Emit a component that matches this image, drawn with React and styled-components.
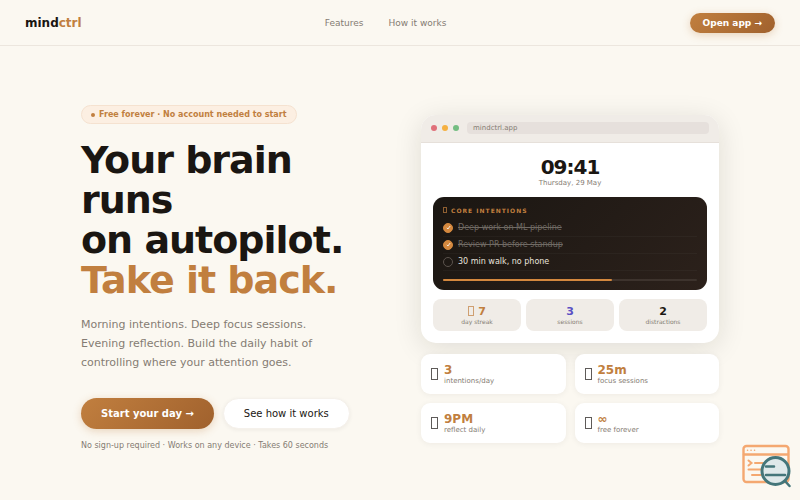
import React from "react";
import styled, { createGlobalStyle } from "styled-components";

const GlobalStyle = createGlobalStyle`
  * {
    box-sizing: border-box;
  }
  body {
    margin: 0;
    background-color: #fbf8f1;
    color: #1a1612;
    font-family: "DejaVu Sans", sans-serif;
  }
`;

const Navbar = styled.nav`
  display: flex;
  justify-content: space-between;
  align-items: center;
  height: 46px;
  padding: 0 25px;
  border-bottom: 1px solid #ece6de;
`;
const Logo = styled.a`
  color: #1a1612;
  font-size: 12px;
  font-weight: bold;
  text-decoration: none;
  span {
    color: #c17f3f;
  }
`;
const NavLinks = styled.div`
  display: flex;
  gap: 25px;
`;
const NavLink = styled.a`
  color: #857c73;
  font-size: 9px;
  text-decoration: none;
`;

const Button = styled.button`
  height: ${(props) => (props.$small ? "20px" : "31px")};
  padding: ${(props) => (props.$small ? "0 13px" : "0 20px")};
  border: ${(props) => (props.$light ? "1px solid #f5f1eb" : "none")};
  border-radius: 16px;
  background: ${(props) =>
    props.$light ? "#fff" : "linear-gradient(135deg, #c17f3f, #a0612d)"};
  color: ${(props) => (props.$light ? "#1a1612" : "#fff")};
  font-family: inherit;
  font-size: ${(props) => (props.$small ? "9px" : "10px")};
  font-weight: ${(props) => (props.$light ? "normal" : "bold")};
  white-space: nowrap;
  box-shadow: ${(props) =>
    props.$light
      ? "0 1px 4px rgba(26, 22, 18, 0.06)"
      : "0 2px 8px rgba(193, 127, 63, 0.3)"};
  cursor: pointer;
`;

const Hero = styled.main`
  display: grid;
  grid-template-columns: 1fr 1fr;
  gap: 42px;
  align-items: center;
  max-width: 688px;
  margin: 0 auto;
  padding: 59px 25px 40px;
`;
const HeroText = styled.section`
  display: flex;
  flex-direction: column;
  align-items: flex-start;
`;
const Badge = styled.div`
  display: flex;
  align-items: center;
  gap: 4px;
  height: 19px;
  padding: 0 9px;
  border: 1px solid #f5e2d0;
  border-radius: 10px;
  background-color: #fcefe2;
  color: #c17f3f;
  font-size: 8px;
  font-weight: bold;
  white-space: nowrap;
`;
const BadgeDot = styled.span`
  width: 4px;
  height: 4px;
  border-radius: 50%;
  background-color: #c17f3f;
`;
const HeroTitle = styled.h1`
  margin: 16px 0 15px;
  font-size: 38px;
  line-height: 40px;
  letter-spacing: -1px;
  span {
    color: #c17f3f;
  }
`;
const HeroCopy = styled.p`
  max-width: 262px;
  margin: 0 0 26px;
  color: #857c73;
  font-size: 11px;
  line-height: 19px;
`;
const Actions = styled.div`
  display: flex;
  gap: 9px;
`;
const Note = styled.p`
  margin: 11px 0 0;
  color: #857c73;
  font-size: 8px;
  line-height: 12px;
  white-space: nowrap;
`;

const Preview = styled.section`
  display: flex;
  flex-direction: column;
  gap: 11px;
`;
const BrowserWindow = styled.div`
  overflow: hidden;
  border-radius: 15px;
  background-color: #fff;
  box-shadow: 0 5px 28px rgba(26, 22, 18, 0.12);
`;
const BrowserBar = styled.div`
  display: flex;
  align-items: center;
  gap: 5px;
  height: 28px;
  padding: 0 10px;
  border-bottom: 1px solid #e6e0da;
  background-color: #f0ece7;
`;
const WindowDot = styled.span`
  width: 6px;
  height: 6px;
  border-radius: 50%;
  background-color: ${(props) => props.$color};
`;
const Address = styled.div`
  flex: 1;
  margin-left: 3px;
  padding: 0 6px;
  border-radius: 4px;
  background-color: #e6e0dc;
  color: #857c73;
  font-size: 7px;
  line-height: 12px;
`;
const Screen = styled.div`
  padding: 12px;
`;
const Clock = styled.div`
  font-size: 20px;
  font-weight: bold;
  line-height: 24px;
  letter-spacing: -1px;
  text-align: center;
`;
const Today = styled.div`
  margin-bottom: 9px;
  color: #857c73;
  font-size: 7px;
  line-height: 9px;
  text-align: center;
`;

const Intentions = styled.div`
  margin-bottom: 9px;
  padding: 9px 10px;
  border-radius: 11px;
  background: linear-gradient(135deg, #1a1612, #2c211b);
`;
const IntentionsTitle = styled.h2`
  display: flex;
  align-items: center;
  gap: 4px;
  margin: 0 0 5px;
  color: #c17f3f;
  font-size: 6px;
  line-height: 9px;
  letter-spacing: 1px;
`;
const Intention = styled.div`
  display: flex;
  align-items: center;
  gap: 5px;
  height: 17px;
  border-bottom: 1px solid rgba(255, 255, 255, 0.03);
  color: ${(props) => (props.$done ? "#6f6963" : "#e8e3dd")};
  font-size: 8px;
  text-decoration: ${(props) => (props.$done ? "line-through" : "none")};
`;
const Check = styled.span`
  display: flex;
  align-items: center;
  justify-content: center;
  width: 10px;
  height: 10px;
  border: 1px solid ${(props) => (props.$done ? "#d4883e" : "#5b534d")};
  border-radius: 50%;
  background-color: ${(props) => (props.$done ? "#d4883e" : "transparent")};
`;
const CheckMark = styled.svg`
  width: 5px;
  height: 5px;
  stroke: #fff;
`;
const Progress = styled.div`
  height: 2px;
  margin-top: 8px;
  border-radius: 1px;
  background-color: #3d332d;
`;
const ProgressFill = styled.div`
  height: 100%;
  border-radius: 1px;
  background-color: #d4883e;
`;

const Stats = styled.div`
  display: grid;
  grid-template-columns: repeat(3, 1fr);
  gap: 5px;
`;
const Stat = styled.div`
  padding: 6px 0 5px;
  border-radius: 8px;
  background-color: #f0ece7;
  text-align: center;
`;
const StatValue = styled.div`
  display: flex;
  align-items: center;
  justify-content: center;
  gap: 4px;
  color: ${(props) => props.$color};
  font-size: 11px;
  font-weight: bold;
  line-height: 13px;
`;
const StatLabel = styled.div`
  color: #857c73;
  font-size: ${(props) => (props.$small ? "6px" : "7px")};
  line-height: 8px;
`;

const Facts = styled.div`
  display: grid;
  grid-template-columns: 1fr 1fr;
  gap: 9px;
`;
const Fact = styled.div`
  display: flex;
  align-items: center;
  gap: 6px;
  height: 40px;
  padding: 0 10px;
  border-radius: 9px;
  background-color: #fff;
  box-shadow: 0 1px 6px rgba(26, 22, 18, 0.06);
`;
const FactValue = styled.div`
  color: #c17f3f;
  font-size: 12px;
  font-weight: bold;
  line-height: 14px;
`;

const glyphSizes = {
  small: "width: 4px; height: 6px;",
  medium: "width: 6px; height: 10px;",
  large: "width: 7px; height: 12px;",
};
const Glyph = styled.span`
  ${(props) => glyphSizes[props.$size]}
  border: 1px solid currentColor;
  opacity: 0.7;
`;

const Inspector = styled.svg`
  position: fixed;
  right: 9px;
  bottom: 11px;
  width: 49px;
  height: 45px;
`;

const intentions = [
  { text: "Deep work on ML pipeline", done: true },
  { text: "Review PR before standup", done: true },
  { text: "30 min walk, no phone", done: false },
];

const stats = [
  { value: "7", label: "day streak", color: "#c17f3f", glyph: true },
  { value: "3", label: "sessions", color: "#5b50c4" },
  { value: "2", label: "distractions", color: "#1a1612" },
];

const facts = [
  { value: "3", label: "intentions/day" },
  { value: "25m", label: "focus sessions" },
  { value: "9PM", label: "reflect daily" },
  { value: "∞", label: "free forever" },
];

function App() {
  return (
    <>
      <GlobalStyle />
      <Navbar>
        <Logo href="#">
          mind<span>ctrl</span>
        </Logo>
        <NavLinks>
          <NavLink href="#features">Features</NavLink>
          <NavLink href="#how">How it works</NavLink>
        </NavLinks>
        <Button $small>Open app →</Button>
      </Navbar>
      <Hero>
        <HeroText>
          <Badge>
            <BadgeDot />
            Free forever · No account needed to start
          </Badge>
          <HeroTitle>
            Your brain runs
            <br />
            on autopilot.
            <br />
            <span>Take it back.</span>
          </HeroTitle>
          <HeroCopy>
            Morning intentions. Deep focus sessions. Evening reflection. Build
            the daily habit of controlling where your attention goes.
          </HeroCopy>
          <Actions>
            <Button>Start your day →</Button>
            <Button $light>See how it works</Button>
          </Actions>
          <Note>
            No sign-up required · Works on any device · Takes 60 seconds
          </Note>
        </HeroText>
        <Preview>
          <BrowserWindow>
            <BrowserBar>
              <WindowDot $color="#e0707a" />
              <WindowDot $color="#f5b041" />
              <WindowDot $color="#74bd82" />
              <Address>mindctrl.app</Address>
            </BrowserBar>
            <Screen>
              <Clock>09:41</Clock>
              <Today>Thursday, 29 May</Today>
              <Intentions>
                <IntentionsTitle>
                  <Glyph $size="small" />
                  CORE INTENTIONS
                </IntentionsTitle>
                {intentions.map((item) => (
                  <Intention key={item.text} $done={item.done}>
                    <Check $done={item.done}>
                      {item.done && (
                        <CheckMark viewBox="0 0 6 6" fill="none">
                          <path d="M1 3.4l1.3 1.4L5 1.2" />
                        </CheckMark>
                      )}
                    </Check>
                    {item.text}
                  </Intention>
                ))}
                <Progress>
                  <ProgressFill style={{ width: `${(2 / 3) * 100}%` }} />
                </Progress>
              </Intentions>
              <Stats>
                {stats.map((stat) => (
                  <Stat key={stat.label}>
                    <StatValue $color={stat.color}>
                      {stat.glyph && <Glyph $size="medium" />}
                      {stat.value}
                    </StatValue>
                    <StatLabel $small>{stat.label}</StatLabel>
                  </Stat>
                ))}
              </Stats>
            </Screen>
          </BrowserWindow>
          <Facts>
            {facts.map((fact) => (
              <Fact key={fact.label}>
                <Glyph $size="large" />
                <div>
                  <FactValue>{fact.value}</FactValue>
                  <StatLabel>{fact.label}</StatLabel>
                </div>
              </Fact>
            ))}
          </Facts>
        </Preview>
      </Hero>
      <Inspector viewBox="0 0 49 45" fill="none" strokeLinecap="round">
        <g stroke="#f4a871" strokeWidth="2.4">
          <rect x="1.5" y="2" width="45" height="36" rx="3" />
          <path d="M2 10.5h44" />
          <path d="M5.5 6.3h.1M9 6.3h.1M12.5 6.3h.1" strokeWidth="1.5" />
          <path d="M6.5 16.5l3 2.5-3 2.5M13 19h8M6.5 25.5h12M10 31h9" strokeWidth="2" />
        </g>
        <circle cx="33.5" cy="27" r="13.5" fill="#dfe9ea" stroke="#44767a" strokeWidth="3" />
        <path d="M24 22.5h8M24 31h19M43 37l4.5 5" stroke="#44767a" strokeWidth="2.5" />
      </Inspector>
    </>
  );
}

export default App;
